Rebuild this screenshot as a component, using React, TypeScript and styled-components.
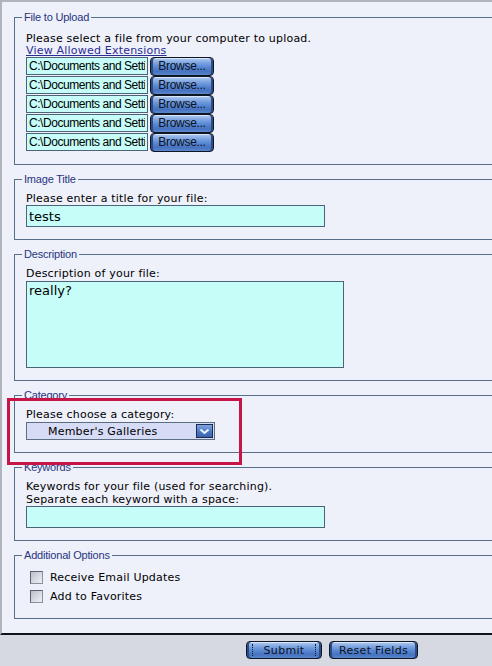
import styled, { createGlobalStyle } from 'styled-components';

const GlobalStyle = createGlobalStyle`
  html, body {
    margin: 0;
    padding: 0;
  }
  body {
    width: 492px;
    height: 666px;
    overflow: hidden;
    background: #d6d8e2;
    font-family: 'DejaVu Sans', Verdana, sans-serif;
  }
`;

const FILE_ROWS = 5;
const FILE_PATH = 'C:\\Documents and Settings\\user\\My Documents\\photo.jpg';

export default function App() {
  return (
    <>
      <GlobalStyle />
      <Page>
        <Panel>
          <Fieldset>
            <Legend>File to Upload</Legend>
            <Intro>Please select a file from your computer to upload.</Intro>
            <Link>View Allowed Extensions</Link>
            {Array.from({ length: FILE_ROWS }).map((_, i) => (
              <FileRow key={i}>
                <FileInput readOnly value={FILE_PATH} />
                <GlossButton $width={64}>Browse...</GlossButton>
              </FileRow>
            ))}
          </Fieldset>

          <Fieldset>
            <Legend>Image Title</Legend>
            <Label>Please enter a title for your file:</Label>
            <TextBox $width={299} readOnly value="tests" />
          </Fieldset>

          <Fieldset>
            <Legend>Description</Legend>
            <Label>Description of your file:</Label>
            <TextArea readOnly value="really?" />
          </Fieldset>

          <Fieldset>
            <Legend>Category</Legend>
            <Label>Please choose a category:</Label>
            <SelectBox>
              <SelectText>Member's Galleries</SelectText>
              <SelectArrow>
                <svg width="11" height="7" viewBox="0 0 11 7">
                  <path d="M1.5 1.5 L5.5 5 L9.5 1.5" fill="none" stroke="#eaf6ff" strokeWidth="2" />
                </svg>
              </SelectArrow>
            </SelectBox>
          </Fieldset>

          <Fieldset>
            <Legend>Keywords</Legend>
            <Label>Keywords for your file (used for searching).</Label>
            <Label>Separate each keyword with a space:</Label>
            <TextBox $width={299} readOnly value="" />
          </Fieldset>

          <Fieldset>
            <Legend>Additional Options</Legend>
            <CheckRow>
              <CheckBox />
              Receive Email Updates
            </CheckRow>
            <CheckRow>
              <CheckBox />
              Add to Favorites
            </CheckRow>
          </Fieldset>
        </Panel>

        <Footer>
          <GlossButton $width={76} $height={18} $focused>
            Submit
          </GlossButton>
          <GlossButton $width={89} $height={18}>
            Reset Fields
          </GlossButton>
        </Footer>

        <Highlight />
      </Page>
    </>
  );
}

const Page = styled.div`
  position: relative;
  width: 492px;
  height: 666px;
  overflow: hidden;
  background: #d6d8e2;
`;

const Panel = styled.div`
  box-sizing: border-box;
  height: 635px;
  overflow: hidden;
  padding-top: 9px;
  background: #eef0fa;
  border-top: 2px solid #b2b4bc;
  border-left: 2px solid #b2b4bc;
  border-bottom: 2px solid #111318;
`;

const Fieldset = styled.fieldset`
  width: 520px;
  min-width: 0;
  margin: 0 0 8px 12px;
  padding: 7px 0 12px 11px;
  border: 1px solid #566f8b;
  font-size: 11px;
  line-height: 13px;
  letter-spacing: 0.2px;
  color: #000;
`;

const Legend = styled.legend`
  margin-left: -4px;
  padding: 0 2px;
  font-family: 'Liberation Sans', Arial, sans-serif;
  font-size: 11px;
  line-height: 12px;
  letter-spacing: -0.2px;
  color: #27357e;
`;

const Intro = styled.div`
  padding-top: 2px;
`;

const Label = styled.div``;

const Link = styled.div`
  margin-top: -1px;
  color: #2b2d93;
  text-decoration: underline;
`;

const FileRow = styled.div`
  display: flex;
  align-items: flex-start;
  gap: 2px;
  height: 19px;
`;

const fieldBase = `
  box-sizing: border-box;
  margin: 0;
  padding: 0 2px;
  background: #c6fdf9;
  border: 1px solid #4b6479;
  border-radius: 0;
  outline: none;
  color: #000;
  font-family: 'DejaVu Sans', Verdana, sans-serif;
  font-size: 13px;
`;

const FileInput = styled.input`
  ${fieldBase}
  display: block;
  width: 122px;
  height: 18px;
  font-family: 'Liberation Sans', Arial, sans-serif;
  font-size: 12px;
  letter-spacing: -0.45px;
`;

const GlossButton = styled.div<{ $width: number; $height?: number; $focused?: boolean }>`
  position: relative;
  box-sizing: border-box;
  width: ${(p) => p.$width}px;
  height: ${(p) => p.$height ?? 19}px;
  display: flex;
  align-items: center;
  justify-content: center;
  border: 1px solid #0f1624;
  border-radius: 4px;
  background: linear-gradient(
    to bottom,
    #b4cdf0 0%,
    #79a2e0 30%,
    #5786d2 55%,
    #4672c0 80%,
    #5c86cc 100%
  );
  box-shadow: inset 2px 0 0 #2e4b86, inset -2px 0 0 #2e4b86, inset 0 1px 0 #d8e6fa;
  font-family: ${(p) => (p.$height ? "'DejaVu Sans', Verdana, sans-serif" : "'Liberation Sans', Arial, sans-serif")};
  font-size: ${(p) => (p.$height ? 11 : 12)}px;
  letter-spacing: ${(p) => (p.$height ? 0.3 : -0.3)}px;
  color: #0c1220;
  ${(p) =>
    p.$focused &&
    `
    &::after {
      content: '';
      position: absolute;
      inset: 2px 5px;
      border-left: 1px dotted #101820;
      border-right: 1px dotted #101820;
    }
  `}
`;

const TextBox = styled.input<{ $width: number }>`
  ${fieldBase}
  display: block;
  width: ${(p) => p.$width}px;
  height: 22px;
`;

const TextArea = styled.textarea`
  ${fieldBase}
  display: block;
  width: 318px;
  height: 87px;
  margin-top: 1px;
  resize: none;
  overflow: hidden;
  line-height: 17px;
`;

const SelectBox = styled.div`
  box-sizing: border-box;
  display: flex;
  align-items: center;
  width: 189px;
  height: 18px;
  margin-top: 1px;
  background: #d7dcf6;
  border: 1px solid #5d6d82;
`;

const SelectText = styled.span`
  padding-left: 21px;
  font-size: 11px;
`;

const SelectArrow = styled.span`
  box-sizing: border-box;
  display: flex;
  align-items: center;
  justify-content: center;
  width: 17px;
  height: 14px;
  margin-left: auto;
  margin-right: 1px;
  border: 1px solid #1b2a4e;
  background: linear-gradient(to bottom, #7ea4e2, #4a76c2 60%, #3b62ae);
`;

const CheckRow = styled.div`
  display: flex;
  align-items: center;
  gap: 7px;
  height: 19px;
  padding-left: 4px;
`;

const CheckBox = styled.span`
  box-sizing: border-box;
  width: 13px;
  height: 13px;
  border: 1px solid #5b6170;
  border-bottom-color: #8a909c;
  border-right-color: #8a909c;
  background: linear-gradient(135deg, #b9bec9 0%, #d6d9e1 50%, #eef0f4 100%);
`;

const Footer = styled.div`
  display: flex;
  gap: 7px;
  padding: 6px 0 0 246px;
`;

const Highlight = styled.div`
  position: absolute;
  left: 7px;
  top: 398px;
  box-sizing: border-box;
  width: 235px;
  height: 67px;
  border: 3px solid #c81547;
  pointer-events: none;
`;
